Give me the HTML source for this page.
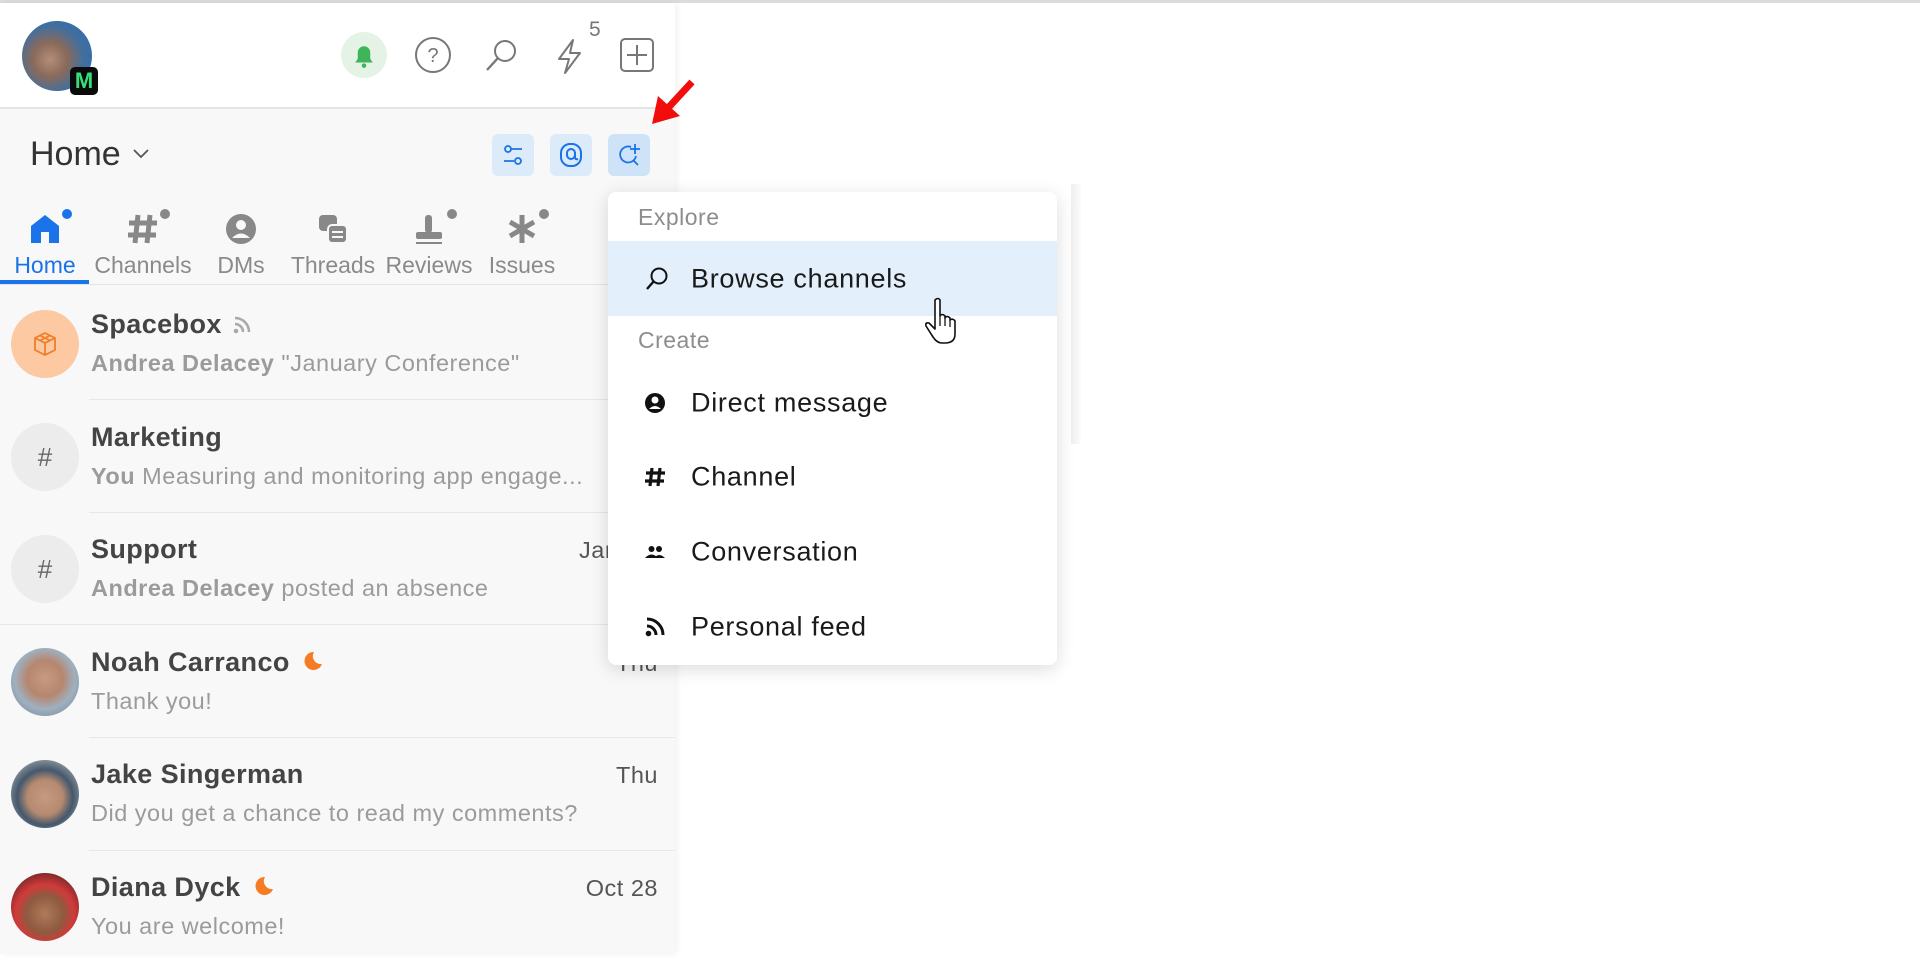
<!DOCTYPE html>
<html><head><meta charset="utf-8"><style>
*{box-sizing:border-box;margin:0;padding:0}
body{width:1920px;height:954px;overflow:hidden;background:#fff;font-family:"Liberation Sans","DejaVu Sans",sans-serif;position:relative}
.abs{position:absolute}
#topline{left:0;top:0;width:1920px;height:3px;background:#dcdcdc}
#side{left:0;top:3px;width:675px;height:951px;background:#f8f8f9;box-shadow:2px 0 6px rgba(0,0,0,.06)}
#hdr{left:0;top:3px;width:675px;height:106px;background:#fff;border-bottom:2px solid #e4e4e4}
.ic{position:absolute}
.btn{position:absolute;top:134px;width:42px;height:42px;border-radius:6px;background:#dcebfa}
.tab{position:absolute;top:212px;width:100px;text-align:center;font-size:23px;color:#8a8a8a}
.tab .lbl{position:absolute;top:40px;left:-10px;width:120px;white-space:nowrap}
.row{position:absolute;left:0;width:675px;height:112px}
.av{position:absolute;left:11px;width:68px;height:68px;border-radius:50%}
.nm{position:absolute;left:91px;font-size:27px;font-weight:bold;color:#444;white-space:nowrap;letter-spacing:0.4px}
.nm svg{vertical-align:-2px;margin-left:10px}
.pv{position:absolute;left:91px;font-size:23.5px;color:#9b9b9b;white-space:nowrap;letter-spacing:0.5px}
.pv b{color:#9b9b9b}
.dt{position:absolute;right:17px;font-size:23.5px;color:#555;letter-spacing:0.5px}
.sep{position:absolute;left:89px;width:586px;height:1px;background:#e8e8e8}
#menu{left:608px;top:192px;width:449px;height:473px;background:#fff;border-radius:8px;box-shadow:0 4px 18px rgba(0,0,0,.14)}
.mh{position:absolute;left:30px;font-size:23px;color:#8d8d8d;letter-spacing:0.5px}
.mi{position:absolute;left:0;width:449px;height:75px;font-size:27px;color:#1a1a1a;letter-spacing:0.7px}
.mi span{position:absolute;left:83px;top:50%;transform:translateY(-50%)}
.mi svg{position:absolute;left:36px;top:50%;transform:translateY(-50%)}
</style></head><body>
<div class="abs" style="left:1071px;top:184px;width:10px;height:260px;background:linear-gradient(90deg,#eeeeee,#fcfcfc)"></div>
<div id="topline" class="abs"></div>
<div id="side" class="abs"></div>
<div id="hdr" class="abs"></div>

<div class="abs" style="left:22px;top:21px;width:70px;height:70px;border-radius:50%;background:radial-gradient(circle at 40% 55%,#b58d78 0,#8a6a5a 30%,#3f6fa0 60%,#2d6db0 100%)"></div>
<div class="abs" style="left:70px;top:67px;width:28px;height:28px;border-radius:5px;background:#0b0b0b;color:#35e07a;font-weight:bold;font-size:22px;text-align:center;line-height:28px">M</div>

<div class="abs" style="left:341px;top:32px;width:46px;height:46px;border-radius:50%;background:#e4f3e6"></div>
<svg class="ic" style="left:349px;top:40px" width="30" height="30" viewBox="0 0 24 24"><path d="M5 18h14l-2-3v-5a5 5 0 0 0-10 0v5z" fill="#3fb55a"/><circle cx="12" cy="20.5" r="1.8" fill="#3fb55a"/></svg>
<svg class="ic" style="left:414px;top:36px" width="38" height="38" viewBox="0 0 38 38"><circle cx="19" cy="19" r="17" fill="none" stroke="#777" stroke-width="2"/><text x="19" y="26" font-size="20" text-anchor="middle" fill="#777" font-family="Liberation Sans">?</text></svg>
<svg class="ic" style="left:484px;top:37px" width="36" height="36" viewBox="0 0 36 36"><circle cx="21" cy="14" r="10" fill="none" stroke="#777" stroke-width="2"/><path d="M14 21 3 33" stroke="#777" stroke-width="2.4"/></svg>
<svg class="ic" style="left:553px;top:37px" width="32" height="38" viewBox="0 0 32 38"><path d="M20 3 6 22h10l-4 14 15-20H17z" fill="none" stroke="#777" stroke-width="2" stroke-linejoin="round"/></svg>
<div class="abs" style="left:589px;top:18px;font-size:21px;color:#777">5</div>
<svg class="ic" style="left:619px;top:37px" width="36" height="36" viewBox="0 0 36 36"><rect x="2" y="2" width="32" height="32" rx="4" fill="none" stroke="#777" stroke-width="2"/><path d="M18 8v20M8 18h20" stroke="#777" stroke-width="2"/></svg>

<div class="abs" style="left:30px;top:135px;font-size:34px;color:#333">Home</div>
<svg class="ic" style="left:132px;top:148px" width="18" height="12" viewBox="0 0 18 12"><path d="M2 2l7 7 7-7" fill="none" stroke="#555" stroke-width="1.8"/></svg>
<div class="btn" style="left:492px"></div>
<svg class="ic" style="left:500px;top:142px" width="26" height="26" viewBox="0 0 26 26"><circle cx="8" cy="7" r="3" fill="none" stroke="#1a73e8" stroke-width="1.8"/><path d="M11 7h11M4 19h10" stroke="#1a73e8" stroke-width="1.8"/><circle cx="18" cy="19" r="3" fill="none" stroke="#1a73e8" stroke-width="1.8"/></svg>
<div class="btn" style="left:550px"></div>
<svg class="ic" style="left:558px;top:142px" width="26" height="26" viewBox="0 0 26 26"><rect x="3" y="2" width="20" height="22" rx="9" fill="none" stroke="#1a73e8" stroke-width="2"/><rect x="9" y="7" width="8" height="10" rx="4" fill="none" stroke="#1a73e8" stroke-width="2"/><path d="M17 10v5q0 3 3 2" fill="none" stroke="#1a73e8" stroke-width="2"/></svg>
<div class="btn" style="left:608px;background:#cfe3f8"></div>
<svg class="ic" style="left:615px;top:141px" width="28" height="28" viewBox="0 0 28 28"><path d="M16 6a8 8 0 1 0 5 9" fill="none" stroke="#1a73e8" stroke-width="1.8"/><path d="M20 3v10M15 8h10M18 19l5 5" stroke="#1a73e8" stroke-width="1.8"/></svg>

<svg class="ic" style="left:648px;top:78px" width="48" height="50" viewBox="0 0 48 50"><path d="M44 4 20 30" stroke="#f20d0d" stroke-width="7"/><path d="M4 46 10 18 32 38z" fill="#f20d0d"/></svg>

<div class="tab" style="left:-5px;color:#1a73e8"><svg width="34" height="34" viewBox="0 0 34 34"><path d="M3 14 17 3l14 11v17H21V20h-8v11H3z" fill="#1a73e8"/></svg><div class="lbl">Home</div></div>
<div class="abs" style="left:62px;top:209px;width:10px;height:10px;border-radius:50%;background:#1a73e8"></div>
<div class="tab" style="left:93px"><svg width="34" height="34" viewBox="0 0 34 34"><path d="M12 3 9 31M24 3l-3 28M3 11h28M2 23h28" stroke="#888" stroke-width="5"/></svg><div class="lbl">Channels</div></div>
<div class="abs" style="left:160px;top:209px;width:10px;height:10px;border-radius:50%;background:#888"></div>
<div class="tab" style="left:191px"><svg width="34" height="34" viewBox="0 0 34 34"><circle cx="17" cy="17" r="15" fill="#888"/><circle cx="17" cy="13" r="5" fill="#f8f8f9"/><path d="M8 26q9-9 18 0" fill="#f8f8f9"/></svg><div class="lbl">DMs</div></div>
<div class="tab" style="left:283px"><svg width="34" height="34" viewBox="0 0 34 34"><rect x="3" y="3" width="18" height="16" rx="4" fill="#888"/><rect x="12" y="13" width="19" height="18" rx="4" fill="#888" stroke="#f8f8f9" stroke-width="2"/><path d="M16 20h11M16 25h11" stroke="#f8f8f9" stroke-width="2"/></svg><div class="lbl">Threads</div></div>
<div class="tab" style="left:379px"><svg width="34" height="34" viewBox="0 0 34 34"><rect x="13" y="3" width="7" height="18" rx="3" fill="#888"/><rect x="4" y="20" width="26" height="7" rx="2" fill="#888"/><rect x="4" y="30" width="26" height="2" fill="#888"/></svg><div class="lbl">Reviews</div></div>
<div class="abs" style="left:447px;top:209px;width:10px;height:10px;border-radius:50%;background:#888"></div>
<div class="tab" style="left:472px"><svg width="34" height="34" viewBox="0 0 34 34"><path d="M17 3v28M5 10l24 14M29 10 5 24" stroke="#888" stroke-width="5"/></svg><div class="lbl">Issues</div></div>
<div class="abs" style="left:539px;top:209px;width:10px;height:10px;border-radius:50%;background:#888"></div>
<div class="abs" style="left:0;top:284px;width:675px;height:1px;background:#e4e4e4"></div>
<div class="abs" style="left:0;top:280px;width:89px;height:4px;background:#1a73e8"></div>

<div class="row" style="top:288px">
 <div class="av" style="top:22px;background:#fcc9a3"></div>
 <svg class="ic" style="left:31px;top:42px" width="28" height="28" viewBox="0 0 28 28"><path d="M14 3 24 8v12l-10 5-10-5V8zM4 8l10 5 10-5M14 13v12M9 5.5l10 5M19 5.5 9 10.5" fill="none" stroke="#f07d2a" stroke-width="1.8"/></svg>
 <div class="nm" style="top:21px">Spacebox<svg width="20" height="20" viewBox="0 0 20 20"><circle cx="4" cy="16" r="2.3" fill="#aaa"/><path d="M3 9a8 8 0 0 1 8 8M3 3a14 14 0 0 1 14 14" fill="none" stroke="#aaa" stroke-width="2.6"/></svg></div>
 <div class="pv" style="top:62px"><b>Andrea Delacey</b> "January Conference"</div>
</div>
<div class="sep" style="top:399px"></div>
<div class="row" style="top:401px">
 <div class="av" style="top:22px;background:#ececec;color:#666;font-size:26px;text-align:center;line-height:68px">#</div>
 <div class="nm" style="top:21px">Marketing</div>
 <div class="pv" style="top:62px"><b>You</b> Measuring and monitoring app engage...</div>
</div>
<div class="sep" style="top:512px"></div>
<div class="row" style="top:513px">
 <div class="av" style="top:22px;background:#ececec;color:#666;font-size:26px;text-align:center;line-height:68px">#</div>
 <div class="nm" style="top:21px">Support</div>
 <div class="dt" style="top:24px;right:auto;left:579px">Jan</div>
 <div class="pv" style="top:62px"><b>Andrea Delacey</b> posted an absence</div>
</div>
<div class="abs" style="top:624px;left:0;width:675px;height:1px;background:#e8e8e8"></div>
<div class="row" style="top:626px">
 <div class="av" style="top:22px;background:radial-gradient(circle at 50% 45%,#c99a82 0,#b6866e 35%,#9fb0c0 60%,#6c7f90 100%)"></div>
 <div class="nm" style="top:21px">Noah Carranco<svg width="24" height="24" viewBox="0 0 24 24"><path d="M14 3a9 9 0 1 0 8 12A8 8 0 0 1 14 3z" fill="#f57c22"/></svg></div>
 <div class="dt" style="top:24px">Thu</div>
 <div class="pv" style="top:62px">Thank you!</div>
</div>
<div class="sep" style="top:737px"></div>
<div class="row" style="top:738px">
 <div class="av" style="top:22px;background:radial-gradient(circle at 50% 55%,#c79a80 0,#b58a70 35%,#44586d 55%,#d8d4cc 100%)"></div>
 <div class="nm" style="top:21px">Jake Singerman</div>
 <div class="dt" style="top:24px">Thu</div>
 <div class="pv" style="top:62px">Did you get a chance to read my comments?</div>
</div>
<div class="sep" style="top:850px"></div>
<div class="row" style="top:851px">
 <div class="av" style="top:22px;background:radial-gradient(circle at 50% 60%,#b07a5a 0,#8e5a40 35%,#d23a3a 55%,#2a1a14 100%)"></div>
 <div class="nm" style="top:21px">Diana Dyck<svg width="24" height="24" viewBox="0 0 24 24"><path d="M14 3a9 9 0 1 0 8 12A8 8 0 0 1 14 3z" fill="#f57c22"/></svg></div>
 <div class="dt" style="top:24px">Oct 28</div>
 <div class="pv" style="top:62px">You are welcome!</div>
</div>

<div id="menu" class="abs">
 <div class="mh" style="top:12px">Explore</div>
 <div class="mi" style="top:49px;background:#e3effb"><svg width="26" height="26" viewBox="0 0 26 26"><circle cx="15" cy="10" r="7.5" fill="none" stroke="#111" stroke-width="2"/><path d="M10 15 3 23" stroke="#111" stroke-width="2.4"/></svg><span>Browse channels</span></div>
 <div class="mh" style="top:135px">Create</div>
 <div class="mi" style="top:173px"><svg width="22" height="22" viewBox="0 0 22 22"><circle cx="11" cy="11" r="10" fill="#111"/><circle cx="11" cy="8" r="3.5" fill="#fff"/><path d="M5 17q6-6 12 0" fill="#fff"/></svg><span>Direct message</span></div>
 <div class="mi" style="top:247px"><svg width="22" height="22" viewBox="0 0 22 22"><path d="M8 2 6 20M16 2l-2 18M2 7h19M1 15h19" stroke="#111" stroke-width="3.2"/></svg><span>Channel</span></div>
 <div class="mi" style="top:322px"><svg width="22" height="22" viewBox="0 0 22 22"><circle cx="7.5" cy="8" r="3" fill="#111"/><circle cx="15" cy="8" r="3" fill="#111"/><path d="M1 17q6.5-7 13 0zM10 17q5-6 11 0z" fill="#111"/></svg><span>Conversation</span></div>
 <div class="mi" style="top:397px"><svg width="22" height="22" viewBox="0 0 22 22"><circle cx="4.5" cy="17.5" r="2.8" fill="#111"/><path d="M3 10a9 9 0 0 1 9 9M3 3a16 16 0 0 1 16 16" fill="none" stroke="#111" stroke-width="3"/></svg><span>Personal feed</span></div>
</div>

<svg class="ic" style="left:923px;top:296px" width="40" height="50" viewBox="0 0 40 50"><path d="M12 4q3-3 5 0v16q2-3 5 0v2q2-3 5 0v2q3-2 5 1v13q0 9-10 9h-3q-5 0-9-6L3 30q-1-4 3-3l6 6z" fill="#fff" stroke="#111" stroke-width="1.6" stroke-linejoin="round"/><path d="M17 20v10M22 22v8M27 24v7" stroke="#111" stroke-width="1.3"/></svg>
</body></html>
